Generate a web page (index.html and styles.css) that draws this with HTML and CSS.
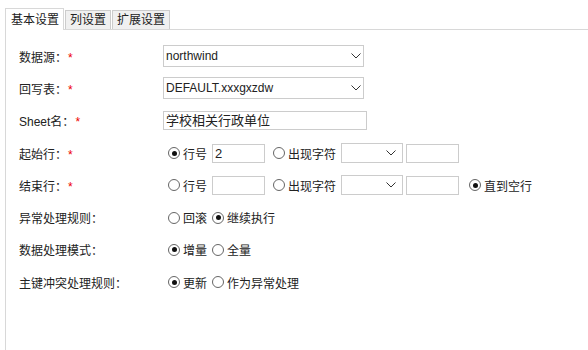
FILE: index.html
```html
<!DOCTYPE html>
<html lang="zh">
<head>
  <meta charset="UTF-8">
  <title>设置</title>
  <link rel="stylesheet" href="styles.css">
</head>
<body>
  <div class="tabs">
    <div class="tab active">基本设置</div>
    <div class="tab">列设置</div>
    <div class="tab">扩展设置</div>
  </div>

  <div class="panel">
    <div class="row">
      <div class="label">数据源：<span class="req">*</span></div>
      <div class="sel wide"><span>northwind</span><svg width="10" height="6" viewBox="0 0 10 6"><path d="M0.5 0.5 L5 5 L9.5 0.5" fill="none" stroke="#333" stroke-width="1"/></svg></div>
    </div>

    <div class="row">
      <div class="label">回写表：<span class="req">*</span></div>
      <div class="sel wide"><span>DEFAULT.xxxgxzdw</span><svg width="10" height="6" viewBox="0 0 10 6"><path d="M0.5 0.5 L5 5 L9.5 0.5" fill="none" stroke="#333" stroke-width="1"/></svg></div>
    </div>

    <div class="row">
      <div class="label">Sheet名：<span class="req">*</span></div>
      <div class="txt sheet">学校相关行政单位</div>
    </div>

    <div class="row">
      <div class="label">起始行：<span class="req">*</span></div>
      <div class="opts">
        <span class="radio on"></span><span class="rl">行号</span>
        <div class="txt small">2</div>
        <span class="radio after"></span><span class="rl">出现字符</span>
        <div class="sel short"><span></span><svg width="10" height="6" viewBox="0 0 10 6"><path d="M0.5 0.5 L5 5 L9.5 0.5" fill="none" stroke="#333" stroke-width="1"/></svg></div>
        <div class="txt small tail"></div>
      </div>
    </div>

    <div class="row">
      <div class="label">结束行：<span class="req">*</span></div>
      <div class="opts">
        <span class="radio"></span><span class="rl">行号</span>
        <div class="txt small"></div>
        <span class="radio after"></span><span class="rl">出现字符</span>
        <div class="sel short"><span></span><svg width="10" height="6" viewBox="0 0 10 6"><path d="M0.5 0.5 L5 5 L9.5 0.5" fill="none" stroke="#333" stroke-width="1"/></svg></div>
        <div class="txt small tail"></div>
        <span class="radio on last"></span><span class="rl">直到空行</span>
      </div>
    </div>

    <div class="row">
      <div class="label">异常处理规则：</div>
      <div class="opts">
        <span class="radio"></span><span class="rl">回滚</span>
        <span class="radio on"></span><span class="rl">继续执行</span>
      </div>
    </div>

    <div class="row">
      <div class="label">数据处理模式：</div>
      <div class="opts">
        <span class="radio on"></span><span class="rl">增量</span>
        <span class="radio"></span><span class="rl">全量</span>
      </div>
    </div>

    <div class="row">
      <div class="label">主键冲突处理规则：</div>
      <div class="opts">
        <span class="radio on"></span><span class="rl">更新</span>
        <span class="radio"></span><span class="rl">作为异常处理</span>
      </div>
    </div>
  </div>
</body>
</html>
```

FILE: styles.css
```css
body{margin: 0; background: #fff; font-family: "Liberation Sans", "Noto Sans CJK SC", sans-serif; font-size: 12px; color: #222;}

.tabs{display: flex; align-items: flex-end; padding: 7px 0 0 5px; height: 22px;}
.tab{height: 18px; line-height: 18px; padding: 0 4px; border: 1px solid #ccc; border-bottom: none; background: #f0f0f0; margin-right: 1px; font-size: 12px; color: #222;}
.tab.active{height: 21px; line-height: 22px; background: #fff; border-color: #d8d8d8; position: relative; margin-bottom: -1px; padding: 0 4px 0 5px; z-index: 1;}

.panel{border-left: 1px solid #d8d8d8; border-top: 1px solid #d8d8d8; margin-left: 5px; height: 321px; padding-top: 10px; box-sizing: border-box;}

.row{display: flex; align-items: center; height: 32.3px; padding-left: 13px;}
.label{width: 144px; flex: none;}
.req{color: #e00; margin-left: 1px;}

.sel{display: flex; align-items: center; justify-content: space-between; box-sizing: border-box; border: 1px solid #ccc; background: #fff; padding: 0 2px 0 2px;}
.sel.wide{width: 201px; height: 22px;}
.sel.short{width: 62px; height: 20px; margin-left: 5px; padding-right: 6px;}

.txt{box-sizing: border-box; border: 1px solid #ccc; height: 19px; line-height: 17px; padding: 0 2px; font-size: 13px;}
.txt.sheet{width: 204px; height: 19px;}
.txt.small{width: 53px; margin-left: 5px;}
.txt.small.tail{margin-left: 3px;}

.opts{display: flex; align-items: center;}
.radio{width: 12px; height: 12px; border: 1px solid #666; border-radius: 50%; box-sizing: border-box; position: relative; background: #fff; flex: none; margin-left: 5px;}
.radio.on:after{content: ""; position: absolute; left: 2.5px; top: 2.5px; width: 5px; height: 5px; border-radius: 50%; background: #111;}
.radio.after{margin-left: 8px;}
.radio.last{margin-left: 10px;}
.rl{margin-left: 3px;}
```
